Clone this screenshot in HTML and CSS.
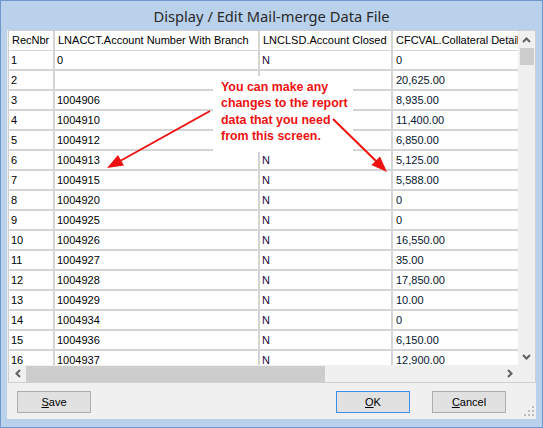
FILE: index.html
```html
<!DOCTYPE html>
<html>
<head>
<meta charset="utf-8">
<link rel="stylesheet" href="styles.css">
</head>
<body>
<div class="screen">
  <div class="window">
    <div class="titlebar">Display / Edit Mail-merge Data File</div>
    <div class="client">
      <div class="grid">
        <div class="grid-main">
          <div class="cells">
            <div class="row head">
              <div class="c">RecNbr</div>
              <div class="c">LNACCT.Account Number With Branch</div>
              <div class="c">LNCLSD.Account Closed</div>
              <div class="c">CFCVAL.Collateral Details</div>
            </div>
            <div class="row"><div class="c">1</div><div class="c">0</div><div class="c n">N</div><div class="c v">0</div></div>
            <div class="row"><div class="c">2</div><div class="c"></div><div class="c"></div><div class="c v">20,625.00</div></div>
            <div class="row"><div class="c">3</div><div class="c">1004906</div><div class="c"></div><div class="c v">8,935.00</div></div>
            <div class="row"><div class="c">4</div><div class="c">1004910</div><div class="c"></div><div class="c v">11,400.00</div></div>
            <div class="row"><div class="c">5</div><div class="c">1004912</div><div class="c"></div><div class="c v">6,850.00</div></div>
            <div class="row"><div class="c">6</div><div class="c">1004913</div><div class="c n">N</div><div class="c v">5,125.00</div></div>
            <div class="row"><div class="c">7</div><div class="c">1004915</div><div class="c n">N</div><div class="c v">5,588.00</div></div>
            <div class="row"><div class="c">8</div><div class="c">1004920</div><div class="c n">N</div><div class="c v">0</div></div>
            <div class="row"><div class="c">9</div><div class="c">1004925</div><div class="c n">N</div><div class="c v">0</div></div>
            <div class="row"><div class="c">10</div><div class="c">1004926</div><div class="c n">N</div><div class="c v">16,550.00</div></div>
            <div class="row"><div class="c">11</div><div class="c">1004927</div><div class="c n">N</div><div class="c v">35.00</div></div>
            <div class="row"><div class="c">12</div><div class="c">1004928</div><div class="c n">N</div><div class="c v">17,850.00</div></div>
            <div class="row"><div class="c">13</div><div class="c">1004929</div><div class="c n">N</div><div class="c v">10.00</div></div>
            <div class="row"><div class="c">14</div><div class="c">1004934</div><div class="c n">N</div><div class="c v">0</div></div>
            <div class="row"><div class="c">15</div><div class="c">1004936</div><div class="c n">N</div><div class="c v">6,150.00</div></div>
            <div class="row"><div class="c">16</div><div class="c">1004937</div><div class="c n">N</div><div class="c v">12,900.00</div></div>
          </div>
          <div class="vscroll">
            <div class="sbtn"><svg width="9" height="6" viewBox="0 0 9 6"><polyline points="1,5 4.5,1.5 8,5" fill="none" stroke="#606060" stroke-width="2"/></svg></div>
            <div class="vthumb"></div>
            <div class="track"></div>
            <div class="sbtn"><svg width="9" height="6" viewBox="0 0 9 6"><polyline points="1,1 4.5,4.5 8,1" fill="none" stroke="#606060" stroke-width="2"/></svg></div>
          </div>
        </div>
        <div class="hscroll-row">
          <div class="hscroll">
            <div class="sbtn"><svg width="6" height="9" viewBox="0 0 6 9"><polyline points="5,1 1.5,4.5 5,8" fill="none" stroke="#606060" stroke-width="2"/></svg></div>
            <div class="hthumb"></div>
            <div class="track"></div>
            <div class="sbtn"><svg width="6" height="9" viewBox="0 0 6 9"><polyline points="1,1 4.5,4.5 1,8" fill="none" stroke="#606060" stroke-width="2"/></svg></div>
          </div>
          <div class="corner"></div>
        </div>
      </div>
      <div class="buttons">
        <button class="btn save"><u>S</u>ave</button>
        <button class="btn default"><u>O</u>K</button>
        <button class="btn"><u>C</u>ancel</button>
      </div>
      <svg class="grip" width="12" height="12" viewBox="0 0 12 12">
        <rect x="9" y="1" width="2" height="2" fill="#bdbdbd"/>
        <rect x="5" y="5" width="2" height="2" fill="#bdbdbd"/>
        <rect x="9" y="5" width="2" height="2" fill="#bdbdbd"/>
        <rect x="1" y="9" width="2" height="2" fill="#bdbdbd"/>
        <rect x="5" y="9" width="2" height="2" fill="#bdbdbd"/>
        <rect x="9" y="9" width="2" height="2" fill="#bdbdbd"/>
      </svg>
    </div>
  </div>
  <div class="callout">You can make any<br>changes to the report<br>data that you need<br>from this screen.</div>
  <svg class="arrows" width="543" height="428" viewBox="0 0 543 428">
    <line x1="210" y1="111" x2="121" y2="160.5" stroke="#ee1111" stroke-width="2"/>
    <polygon points="107,168 124,165.5 118,155" fill="#ee1111"/>
    <line x1="333" y1="119" x2="376" y2="161" stroke="#ee1111" stroke-width="2"/>
    <polygon points="387,172 371.4,165 380,156.5" fill="#ee1111"/>
  </svg>
</div>
</body>
</html>
```

FILE: styles.css
```css
* { box-sizing: border-box; }

body {
  margin: 0;
  background: #ffffff;
  font-family: "Liberation Sans", Arial, sans-serif;
}

.screen {
  position: relative;
  width: 543px;
  height: 428px;
  overflow: hidden;
}

.window {
  width: 543px;
  height: 428px;
  border: 1px solid #6f97c9;
  background: #b9d1ea;
  display: flex;
  flex-direction: column;
}

.titlebar {
  height: 29px;
  display: flex;
  align-items: center;
  justify-content: center;
  font-family: "Noto Sans", "Open Sans", sans-serif;
  font-size: 14.7px;
  color: #2a2a2a;
  padding-top: 1px;
}

.client {
  position: relative;
  flex: 1;
  margin: 0 6px 8px 6px;
  background: #f0f0f0;
  display: flex;
  flex-direction: column;
}

.grid {
  margin-left: 1px;
  height: 353px;
  border: 1px solid #d0d0d0;
  display: flex;
  flex-direction: column;
  background: #f0f0f0;
}

.grid-main {
  display: flex;
  height: 334px;
}

.cells {
  flex: 1;
  overflow: hidden;
  background: #ffffff;
}

.row {
  display: grid;
  grid-template-columns: 46px 205px 133px 150px;
  height: 20px;
  font-size: 11px;
  color: #000;
}

.row .c {
  border-right: 2px solid #d4d4d4;
  border-bottom: 2px solid #d4d4d4;
  padding-left: 2px;
  line-height: 18px;
  white-space: nowrap;
  overflow: hidden;
  background: #ffffff;
}

.row.head .c {
  border-bottom-width: 1px;
  line-height: 19px;
  padding-left: 3px;
}

.row .c.n { color: #1e0a3a; }
.row .c.v { padding-left: 3px; color: #06142e; }

.vscroll {
  width: 17px;
  display: flex;
  flex-direction: column;
  background: #f0f0f0;
}

.sbtn {
  flex: none;
  width: 17px;
  height: 17px;
  display: flex;
  align-items: center;
  justify-content: center;
}

.vthumb {
  height: 17px;
  margin: 0 1px 0 2px;
  background: #cdcdcd;
}

.track { flex: 1; }

.hscroll-row {
  display: flex;
  height: 17px;
}

.hscroll {
  flex: 1;
  display: flex;
  background: #f0f0f0;
}

.hthumb {
  width: 299px;
  margin: 1px 0 0 0;
  background: #cdcdcd;
}

.corner {
  width: 17px;
  background: #f0f0f0;
}

.buttons {
  display: flex;
  padding: 8px 30px 0 10px;
  gap: 22px;
}

.btn {
  width: 74px;
  height: 22px;
  padding: 0;
  font-family: "Liberation Sans", Arial, sans-serif;
  font-size: 11px;
  color: #000;
  background: #e1e1e1;
  border: 1px solid #adadad;
  border-radius: 0;
}

.btn.save { margin-right: auto; }

.btn.default { border-color: #3d8ee6; }

.grip {
  position: absolute;
  right: 1px;
  bottom: 2px;
}

.callout {
  position: absolute;
  left: 213px;
  top: 76px;
  width: 140px;
  height: 76px;
  background: #ffffff;
  padding: 3px 0 0 8px;
  font-family: "Liberation Sans", Arial, sans-serif;
  font-weight: bold;
  font-size: 12.4px;
  line-height: 16.4px;
  color: #ee1111;
  white-space: nowrap;
}

.arrows {
  position: absolute;
  left: 0;
  top: 0;
  pointer-events: none;
}
```
